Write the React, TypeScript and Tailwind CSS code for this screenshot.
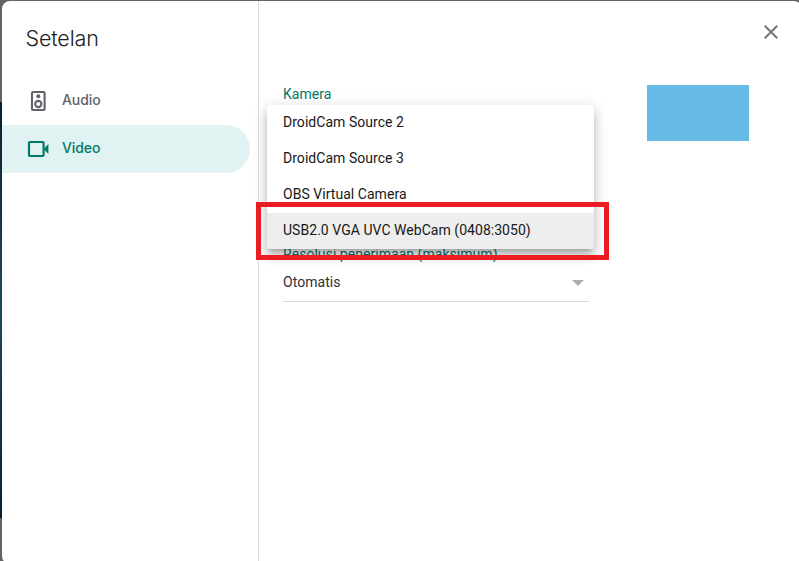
import React from "react";

const cameras = [
  "DroidCam Source 2",
  "DroidCam Source 3",
  "OBS Virtual Camera",
  "USB2.0 VGA UVC WebCam (0408:3050)",
];

function SpeakerIcon() {
  return (
    <svg width="24" height="24" viewBox="0 0 24 24" fill="none" stroke="#5f6368" strokeWidth="2.100">
      <rect x="6" y="3" width="12.600" height="18" rx="1" />
      <circle cx="12.300" cy="7.300" r="2" fill="#5f6368" stroke="none" />
      <circle cx="12.300" cy="15" r="3.100" />
    </svg>
  );
}

function VideoIcon() {
  return (
    <svg width="24" height="24" viewBox="0 0 24 24" fill="none" stroke="#00796b" strokeWidth="2.200">
      <rect x="3" y="5" width="14.600" height="14" rx="1" />
      <path d="M17.500 12l4.900-5v10z" fill="#00796b" stroke="none" />
    </svg>
  );
}

function Sidebar() {
  return (
    <aside className="flex w-[257px] shrink-0 flex-col border-r border-[#dadce0]">
      <h1 className="ml-[23.5px] mt-[21px] h-8 text-[21.5px] font-[350] leading-8 text-[#202124] font-['Inter',sans-serif] tracking-[-0.15px]">
        Setelan
      </h1>
      <nav className="mt-[23px] flex flex-col text-sm font-medium tracking-[-0.1px] font-['Inter',sans-serif]">
        <div className="flex h-12 w-[248px] items-center gap-3 pl-6 text-[#5f6368]">
          <SpeakerIcon />
          <span className="pb-0.5">Audio</span>
        </div>
        <div className="flex h-12 w-[248px] items-center gap-3 rounded-r-full bg-[#e0f2f1] pl-6 text-[#00796b]">
          <VideoIcon />
          <span className="pb-0.5">Video</span>
        </div>
      </nav>
    </aside>
  );
}

function CameraMenu() {
  return (
    <div className="absolute left-[267px] top-[105px] w-[327px] overflow-hidden rounded bg-white shadow-[0_5px_5px_-3px_rgba(0,0,0,0.2),0_8px_10px_1px_rgba(0,0,0,0.14),0_3px_14px_2px_rgba(0,0,0,0.12)]">
      {cameras.map((name, i) => (
        <div
          key={name}
          className={"flex h-9 items-center px-4 pb-0.5 text-[#181818] " + (i === 3 ? "bg-[#eeeeee]" : "bg-white")}
        >
          {name}
        </div>
      ))}
    </div>
  );
}

export default function App() {
  return (
    <div className="relative flex h-[561px] w-[799px] overflow-hidden bg-[linear-gradient(to_bottom,#636363_0,#636363_102px,#0b1f2d_102px,#1c4860_310px,#0b1f2d_518px,#636363_518px)] pl-0.5 pt-px font-['Roboto',sans-serif] text-sm font-[450] tracking-[0.04px]">
      <div className="-mb-[3px] -mr-[3px] flex flex-1 rounded-lg bg-white">
        <Sidebar />
        <main className="flex flex-1 justify-between pl-6 pr-[53px]">
          <section className="flex w-[306px] flex-col pt-[83px]">
            <div className="h-5 leading-5 text-[#00796b]">Kamera</div>
            <div className="mt-[140px] h-5 leading-5 text-[#00796b]">Resolusi penerimaan (maksimum)</div>
            <div className="mt-1 flex h-[34px] justify-between border-b border-[#dadce0] pr-[5px] pt-1 leading-5 text-[#303134]">
              <span>Otomatis</span>
              <svg className="mt-2" width="12" height="6" viewBox="0 0 12 6" fill="#afafaf">
                <path d="M0 0h12L6 6z" />
              </svg>
            </div>
          </section>
          <div className="mt-[84px] h-14 w-[102px] bg-[#65bbe5]" />
        </main>
      </div>
      <button className="absolute left-[764px] top-[25px]" aria-label="Tutup">
        <svg width="14" height="14" viewBox="0 0 14 14" stroke="#777" strokeWidth="2">
          <path d="M.7.700 13.300 13.300M13.300.700.700 13.300" />
        </svg>
      </button>
      <CameraMenu />
      <div className="absolute left-64 top-[202px] h-[58px] w-[353px] border-[5px] border-[#ed1c24]" />
    </div>
  );
}
